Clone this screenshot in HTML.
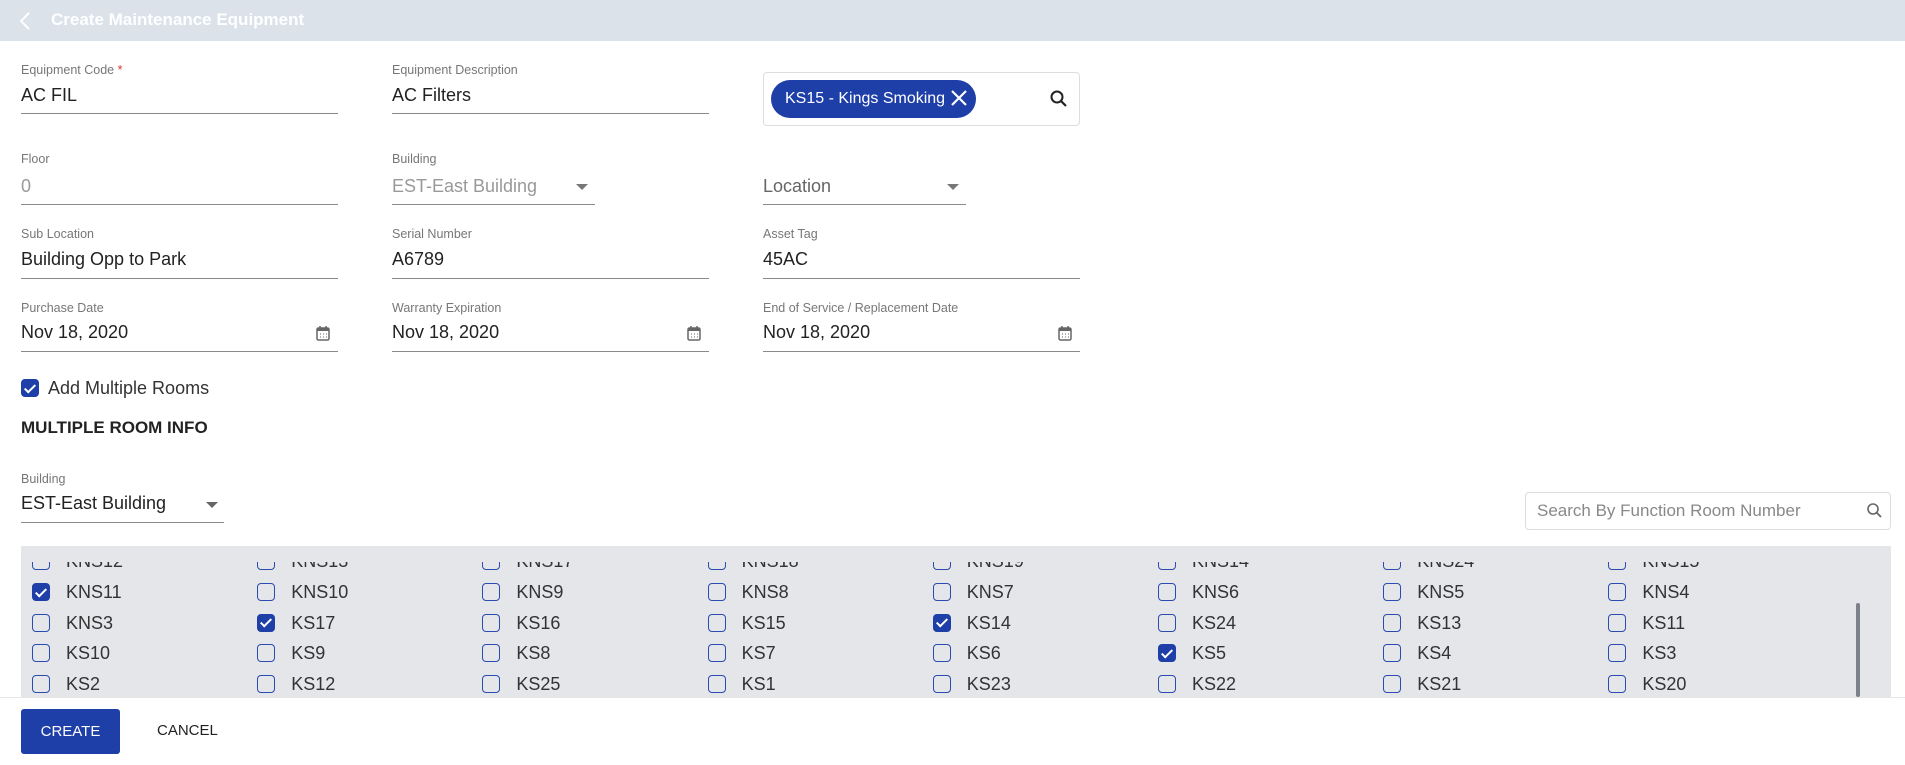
<!DOCTYPE html>
<html><head><meta charset="utf-8"><style>
*{box-sizing:border-box;margin:0;padding:0}
body{width:1905px;height:765px;background:#fff;font-family:"Liberation Sans",sans-serif;position:relative;overflow:hidden;color:#333}
.a{position:absolute;white-space:nowrap}
.hdr{left:0;top:0;width:1905px;height:41px;background:#dbe2ea}
.lbl{font-size:12.5px;color:#777;line-height:14px}
.val{font-size:18px;color:#222;line-height:22px}
.ul{height:1px;background:#8a8a8a}
.cb{width:18px;height:18px;border:1.5px solid #2a4bb0;border-radius:4px;background:transparent}
.cb.on{background:#1e3ea8;border-color:#1e3ea8}
.cb.on::after{content:"";position:absolute;left:5px;top:1.5px;width:4px;height:9px;border:solid #fff;border-width:0 2px 2px 0;transform:rotate(45deg)}
.rl{font-size:18px;color:#333;line-height:20px}
.arrow{width:0;height:0;border-left:6px solid transparent;border-right:6px solid transparent;border-top:6px solid #666}
</style></head><body>
<div class="a hdr"></div>
<svg class="a" style="left:18px;top:11px" width="14" height="20"><path d="M11 2 L3 10 L11 18" stroke="#fff" stroke-width="2" fill="none"/></svg>
<div class="a" style="left:51px;top:9px;font-size:17px;color:#fff;line-height:22px;font-weight:bold">Create Maintenance Equipment</div>

<div class="a lbl" style="left:21px;top:63px">Equipment Code <span style="color:#d33">*</span></div>
<div class="a val" style="left:21px;top:84px">AC FIL</div>
<div class="a ul" style="left:21px;top:113px;width:317px"></div>
<div class="a lbl" style="left:392px;top:63px">Equipment Description</div>
<div class="a val" style="left:392px;top:84px">AC Filters</div>
<div class="a ul" style="left:392px;top:113px;width:317px"></div>
<div class="a" style="left:763px;top:72px;width:317px;height:54px;border:1px solid #ddd;border-radius:4px"></div>
<div class="a" style="left:771px;top:80px;width:205px;height:38px;border-radius:19px;background:#1e3ea8;color:#fff;font-size:16px;line-height:38px;padding-left:14px">KS15 - Kings Smoking</div>
<svg class="a" style="left:950px;top:89px" width="18" height="18"><path d="M2 2 L16 16 M16 2 L2 16" stroke="#fff" stroke-width="2.2"/></svg>
<svg class="a" style="left:1049px;top:89px" width="20" height="20"><circle cx="8" cy="8" r="5.5" stroke="#222" stroke-width="2" fill="none"/><path d="M12 12 L17 17" stroke="#222" stroke-width="2.2"/></svg>

<div class="a lbl" style="left:21px;top:152px">Floor</div>
<div class="a val" style="left:21px;top:175px;color:#999">0</div>
<div class="a ul" style="left:21px;top:204px;width:317px"></div>
<div class="a lbl" style="left:392px;top:152px">Building</div>
<div class="a val" style="left:392px;top:175px;color:#999">EST-East Building</div>
<div class="a arrow" style="left:576px;top:184px;border-top-color:#777"></div>
<div class="a ul" style="left:392px;top:204px;width:203px"></div>
<div class="a val" style="left:763px;top:175px;color:#666">Location</div>
<div class="a arrow" style="left:947px;top:184px;border-top-color:#777"></div>
<div class="a ul" style="left:763px;top:204px;width:203px"></div>

<div class="a lbl" style="left:21px;top:227px">Sub Location</div>
<div class="a val" style="left:21px;top:248px">Building Opp to Park</div>
<div class="a ul" style="left:21px;top:278px;width:317px"></div>
<div class="a lbl" style="left:392px;top:227px">Serial Number</div>
<div class="a val" style="left:392px;top:248px">A6789</div>
<div class="a ul" style="left:392px;top:278px;width:317px"></div>
<div class="a lbl" style="left:763px;top:227px">Asset Tag</div>
<div class="a val" style="left:763px;top:248px">45AC</div>
<div class="a ul" style="left:763px;top:278px;width:317px"></div>

<div class="a lbl" style="left:21px;top:301px">Purchase Date</div>
<div class="a val" style="left:21px;top:321px">Nov 18, 2020</div>
<div class="a ul" style="left:21px;top:351px;width:317px"></div>
<div class="a lbl" style="left:392px;top:301px">Warranty Expiration</div>
<div class="a val" style="left:392px;top:321px">Nov 18, 2020</div>
<div class="a ul" style="left:392px;top:351px;width:317px"></div>
<div class="a lbl" style="left:763px;top:301px">End of Service / Replacement Date</div>
<div class="a val" style="left:763px;top:321px">Nov 18, 2020</div>
<div class="a ul" style="left:763px;top:351px;width:317px"></div>
<svg class="a" style="left:316px;top:325px" width="14" height="16"><rect x="1" y="3" width="12" height="12" rx="1.5" fill="none" stroke="#666" stroke-width="1.5"/><rect x="1" y="3" width="12" height="3" fill="#666"/><path d="M4 1v3M10 1v3" stroke="#666" stroke-width="1.5"/><path d="M4 9h1M7 9h1M10 9h1M4 12h1M7 12h1M10 12h1" stroke="#666"/></svg>
<svg class="a" style="left:687px;top:325px" width="14" height="16"><rect x="1" y="3" width="12" height="12" rx="1.5" fill="none" stroke="#666" stroke-width="1.5"/><rect x="1" y="3" width="12" height="3" fill="#666"/><path d="M4 1v3M10 1v3" stroke="#666" stroke-width="1.5"/><path d="M4 9h1M7 9h1M10 9h1M4 12h1M7 12h1M10 12h1" stroke="#666"/></svg>
<svg class="a" style="left:1058px;top:325px" width="14" height="16"><rect x="1" y="3" width="12" height="12" rx="1.5" fill="none" stroke="#666" stroke-width="1.5"/><rect x="1" y="3" width="12" height="3" fill="#666"/><path d="M4 1v3M10 1v3" stroke="#666" stroke-width="1.5"/><path d="M4 9h1M7 9h1M10 9h1M4 12h1M7 12h1M10 12h1" stroke="#666"/></svg>

<div class="a cb on" style="left:21px;top:379px"></div>
<div class="a" style="left:48px;top:377px;font-size:18px;line-height:22px;color:#333">Add Multiple Rooms</div>
<div class="a" style="left:21px;top:418px;font-size:17px;font-weight:bold;color:#222;line-height:20px">MULTIPLE ROOM INFO</div>

<div class="a lbl" style="left:21px;top:472px">Building</div>
<div class="a val" style="left:21px;top:492px">EST-East Building</div>
<div class="a arrow" style="left:206px;top:502px"></div>
<div class="a ul" style="left:21px;top:522px;width:203px"></div>

<div class="a" style="left:1525px;top:492px;width:366px;height:38px;border:1px solid #ddd;border-radius:4px"></div>
<div class="a" style="left:1537px;top:501px;font-size:17px;color:#888;line-height:20px">Search By Function Room Number</div>
<svg class="a" style="left:1866px;top:502px" width="18" height="18"><circle cx="7" cy="7" r="5" stroke="#666" stroke-width="1.6" fill="none"/><path d="M10.5 10.5 L15 15" stroke="#666" stroke-width="1.8"/></svg>

<div class="a" style="left:21px;top:546px;width:1870px;height:151px;background:#e4e6ea"></div>
<div class="a" style="left:21px;top:562px;width:1870px;height:135px;overflow:hidden" id="g"></div>
<div class="a" style="left:1856px;top:603px;width:4px;height:94px;background:#7c818a;border-radius:2px"></div>
<div class="a" style="left:0;top:697px;width:1905px;height:1px;background:#e6e6e6"></div>

<div class="a" style="left:21px;top:709px;width:99px;height:45px;background:#1e3ea8;border-radius:3px;color:#fff;font-size:15px;line-height:45px;text-align:center">CREATE</div>
<div class="a" style="left:157px;top:721px;font-size:15px;color:#222;line-height:20px">CANCEL</div>

<script>
var rows=[["KNS12","KNS13","KNS17","KNS18","KNS19","KNS14","KNS24","KNS15"],
["KNS11","KNS10","KNS9","KNS8","KNS7","KNS6","KNS5","KNS4"],
["KNS3","KS17","KS16","KS15","KS14","KS24","KS13","KS11"],
["KS10","KS9","KS8","KS7","KS6","KS5","KS4","KS3"],
["KS2","KS12","KS25","KS1","KS23","KS22","KS21","KS20"]];
var on={"KNS11":1,"KS17":1,"KS14":1,"KS5":1};
var g=document.getElementById('g'),h='';
for(var r=0;r<5;r++)for(var c=0;c<8;c++){
var y=(r===0?561:592+(r-1)*30.7)-562;
var x=11+c*225.2; var n=rows[r][c];
h+='<div class="a cb'+(on[n]?' on':'')+'" style="left:'+x+'px;top:'+(y-9)+'px"></div>';
h+='<div class="a rl" style="left:'+(x+34)+'px;top:'+(y-10)+'px">'+n+'</div>';}
g.innerHTML=h;
</script>
</body></html>
